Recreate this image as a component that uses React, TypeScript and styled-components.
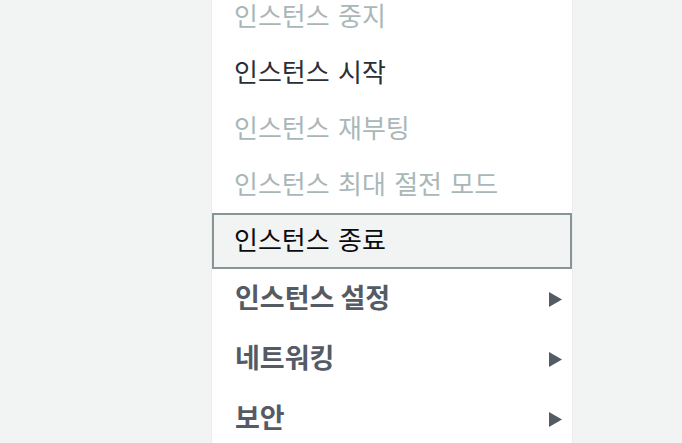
import React from "react";
import styled, { createGlobalStyle } from "styled-components";

const GlobalStyle = createGlobalStyle`
  html, body {
    margin: 0;
    padding: 0;
    background: #f2f3f3;
    height: 100%;
    overflow: hidden;
  }
  body {
    font-family: "Noto Sans CJK KR", "Noto Sans", sans-serif;
  }
`;

interface Item {
  label: string;
  state: "disabled" | "enabled" | "focused";
}

const actions: Item[] = [
  { label: "인스턴스 중지", state: "disabled" },
  { label: "인스턴스 시작", state: "enabled" },
  { label: "인스턴스 재부팅", state: "disabled" },
  { label: "인스턴스 최대 절전 모드", state: "disabled" },
  { label: "인스턴스 종료", state: "focused" },
];

const groups = ["인스턴스 설정", "네트워킹", "보안"];

export default function App() {
  return (
    <>
      <GlobalStyle />
      <Page>
        <Menu>
          <List>
            {actions.map((a) => (
              <ActionRow key={a.label} $state={a.state}>
                {a.label}
              </ActionRow>
            ))}
            {groups.map((g) => (
              <GroupRow key={g}>
                <span>{g}</span>
                <Caret width="13" height="15" viewBox="0 0 13 15">
                  <polygon points="0,0 13,7.5 0,15" fill="#545b64" />
                </Caret>
              </GroupRow>
            ))}
          </List>
        </Menu>
      </Page>
    </>
  );
}

const Page = styled.div`
  height: 443px;
  padding-left: 211px;
  display: flex;
`;

const Menu = styled.div`
  width: 360px;
  height: 100%;
  background: #ffffff;
  border-left: 1px solid #eaeded;
  border-right: 1px solid #eaeded;
  overflow: hidden;
`;

const List = styled.div`
  margin-top: -11px;
  display: flex;
  flex-direction: column;
`;

const ActionRow = styled.div<{ $state: Item["state"] }>`
  height: 56px;
  box-sizing: border-box;
  display: flex;
  align-items: center;
  padding: 0 20px 5px 20px;
  font-size: 26px;
  word-spacing: 2.5px;
  white-space: nowrap;
  border: 2px solid ${(p) => (p.$state === "focused" ? "#879596" : "transparent")};
  background: ${(p) => (p.$state === "focused" ? "#f2f3f3" : "transparent")};
  color: ${(p) =>
    p.$state === "disabled" ? "#aab7b8" : p.$state === "focused" ? "#0b0c0f" : "#2a2f37"};
`;

const GroupRow = styled.div`
  height: 60px;
  box-sizing: border-box;
  display: flex;
  align-items: center;
  justify-content: space-between;
  padding: 0 10px 5px 23px;
  font-size: 27px;
  font-weight: 700;
  color: #545b64;
  white-space: nowrap;
`;

const Caret = styled.svg`
  display: block;
  flex-shrink: 0;
  margin-top: 5px;
`;
